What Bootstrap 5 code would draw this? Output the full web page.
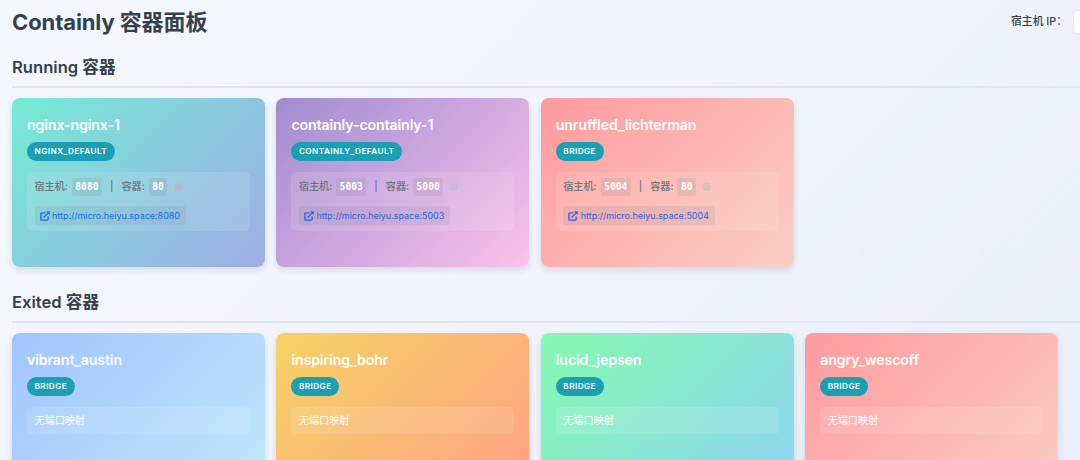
<!DOCTYPE html>
<html lang="zh-CN">
<head>
  <meta charset="UTF-8" />
  <title>Containly 容器面板</title>
  <link href="https://cdn.jsdelivr.net/npm/bootstrap@5.3.3/dist/css/bootstrap.min.css" rel="stylesheet" />
  <style>
    body {
      font-family: Inter, "Noto Sans CJK SC", sans-serif;
      background: linear-gradient(135deg, #f4f8fd 0%, #f2f5fc 45%, #eaeefa 100%);
      color: #34404e;
      height: 460px;
      overflow: hidden;
    }
    .page {
      width: 1345px;
      padding: 0 12px;
    }
    .page-head { height: 44px; }
    .page-head h1 {
      font-size: 22px;
      font-weight: 700;
      letter-spacing: -0.1px;
    }
    .host-ip {
      gap: 6px;
      font-size: 10.8px;
      font-weight: 500;
      margin-right: 96px;
    }
    .host-ip .form-control {
      width: 164px;
      height: 24px;
      border-color: #e5e9f0;
      border-radius: 4px;
    }
    .group { height: 234.5px; }
    .group h2 {
      height: 44px;
      padding-top: 13px;
      font-size: 16.6px;
      font-weight: 600;
      line-height: 20px;
      border-bottom: 2px solid #dfe4ee;
    }
    .card-grid {
      display: grid;
      grid-template-columns: repeat(5, 253px);
      gap: 11.4px;
      padding-top: 10px;
    }
    .box {
      height: 169px;
      padding: 18px 15px;
      border: 0;
      border-radius: 8px;
      box-shadow: 0 3px 6px rgba(60, 75, 100, .16);
    }
    .box h3 {
      font-size: 14.2px;
      font-weight: 600;
      line-height: 18px;
      letter-spacing: -.14px;
      color: #fff;
      margin-bottom: 8px;
    }
    .net {
      height: 19px;
      padding: 0 7.5px;
      font-size: 8.2px;
      font-weight: 600;
      line-height: 19px;
      letter-spacing: .45px;
      color: #fff;
      background: #1a9fb3;
    }
    .ports {
      margin: 11px 0 0;
      padding: 6px 7.5px;
      font-size: 10.1px;
      line-height: 15.5px;
      color: #fff;
      background: rgba(255, 255, 255, .12);
      border-radius: 5px;
    }
    .port-line {
      height: 18px;
      color: #6c757d;
      font-weight: 500;
    }
    .port-line code {
      padding: 0 3.5px;
      margin: 0 4px;
      font: bold 9.6px/18px "DejaVu Sans Mono", monospace;
      color: #fff;
      background: rgba(108, 117, 125, .13);
      border-radius: 3px;
    }
    .dot {
      width: 8px;
      height: 8px;
      margin-left: 3px;
    }
    .url {
      height: 19px;
      margin-top: 10px;
      padding: 0 6px 0 5px;
      font-size: 9px;
      letter-spacing: -.02px;
      color: #176fe8;
      background: rgba(90, 100, 125, .11);
      border-radius: 3px;
    }
    .url svg { margin-right: 2.5px; }
    .c-mint { background: linear-gradient(135deg, #74ebd5, #9face6); }
    .c-purple { background: linear-gradient(135deg, #a18cd1, #fbc2eb); }
    .c-coral { background: linear-gradient(135deg, #ff9a9e, #fad0c4); }
    .c-blue { background: linear-gradient(135deg, #a1c4fd, #c2e9fb); }
    .c-gold { background: linear-gradient(135deg, #f6d365, #fda085); }
    .c-green { background: linear-gradient(135deg, #84fab0, #8fd3f4); }
    .c-mint .dot { background: #b3bcc5; }
    .c-purple .dot { background: #c9b9d4; }
    .c-coral .dot { background: #d5bfbf; }
    .c-purple .url { color: #2b68d8; }
    .c-coral .url { color: #3a5fd6; }
  </style>
</head>
<body>
  <div class="page">
    <header class="page-head d-flex justify-content-between align-items-center">
      <h1 class="mb-0">Containly 容器面板</h1>
      <div class="host-ip d-flex align-items-center">
        <label for="host-ip">宿主机 IP：</label>
        <input type="text" id="host-ip" class="form-control">
      </div>
    </header>

    <section class="group">
      <h2 class="mb-0">Running 容器</h2>
      <div id="running" class="card-grid"></div>
    </section>

    <section class="group">
      <h2 class="mb-0">Exited 容器</h2>
      <div id="exited" class="card-grid"></div>
    </section>
  </div>

  <script src="https://cdn.jsdelivr.net/npm/bootstrap@5.3.3/dist/js/bootstrap.bundle.min.js"></script>
  <script>
    const host = "micro.heiyu.space";

    const running = [
      { name: "nginx-nginx-1", network: "NGINX_DEFAULT", color: "c-mint", hostPort: 8080, port: 80 },
      { name: "containly-containly-1", network: "CONTAINLY_DEFAULT", color: "c-purple", hostPort: 5003, port: 5000 },
      { name: "unruffled_lichterman", network: "BRIDGE", color: "c-coral", hostPort: 5004, port: 80 }
    ];

    const exited = [
      { name: "vibrant_austin", network: "BRIDGE", color: "c-blue" },
      { name: "inspiring_bohr", network: "BRIDGE", color: "c-gold" },
      { name: "lucid_jepsen", network: "BRIDGE", color: "c-green" },
      { name: "angry_wescoff", network: "BRIDGE", color: "c-coral" }
    ];

    const openIcon = `
      <svg width="10" height="10" viewBox="0 0 20 20" fill="none" stroke="currentColor" stroke-width="2.7">
        <path d="M10.5 3.7H4a2.3 2.3 0 0 0-2.3 2.3v10A2.3 2.3 0 0 0 4 18.3h10a2.3 2.3 0 0 0 2.3-2.3v-5M7 13L16.5 3.5" />
        <path d="M12 .5h7.5V8z" fill="currentColor" stroke="none" />
      </svg>`;

    function renderPorts(item) {
      if (!item.hostPort) {
        return "无端口映射";
      }
      return `
        <div class="port-line d-flex align-items-center">
          <span>宿主机:</span><code>${item.hostPort}</code>
          <span class="ms-1 me-2">|</span>
          <span>容器:</span><code>${item.port}</code>
          <span class="dot rounded-circle"></span>
        </div>
        <a class="url d-inline-flex align-items-center text-decoration-none" href="http://${host}:${item.hostPort}">${openIcon}http://${host}:${item.hostPort}</a>`;
    }

    function renderCards(id, data) {
      document.getElementById(id).innerHTML = data.map(item => `
        <div class="card box ${item.color}">
          <h3>${item.name}</h3>
          <span class="net rounded-pill align-self-start">${item.network}</span>
          <div class="ports">${renderPorts(item)}</div>
        </div>
      `).join("");
    }

    renderCards("running", running);
    renderCards("exited", exited);
  </script>
</body>
</html>
